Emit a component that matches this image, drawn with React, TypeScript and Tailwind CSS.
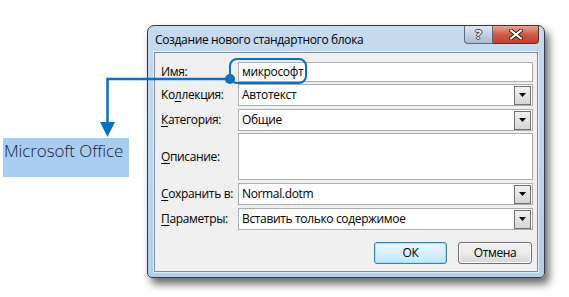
import React from "react";

const font = {
  fontFamily: '"Open Sans", "Noto Sans", Arial, sans-serif',
  letterSpacing: "-0.35px",
};

function Label({ u, rest }: { u: string; rest: string }) {
  return (
    <span className="text-[12px] text-black" style={font}>
      <span className="underline underline-offset-2">{u}</span>
      {rest}
    </span>
  );
}

function Combo({ value }: { value: string }) {
  return (
    <div className="flex h-[22px] items-center border border-[#abadb3] bg-white pl-[3px] pr-[1px]">
      <span className="flex-1 text-[12px] text-black" style={font}>
        {value}
      </span>
      <div className="flex h-[19px] w-[17px] items-center justify-center border border-[#707070] bg-gradient-to-b from-[#f2f2f2] to-[#d6d6d6]">
        <svg width="7" height="4" viewBox="0 0 7 4">
          <polygon points="0,0 7,0 3.5,4" fill="#000" />
        </svg>
      </div>
    </div>
  );
}

export default function App() {
  return (
    <div className="relative h-[297px] w-[569px] overflow-hidden bg-white">
      <div className="pl-[147px] pt-[25px]">
        {/* window */}
        <div className="relative flex h-[253px] w-[398px] flex-col rounded-t-[7px] rounded-b-[5px] border border-[#2f3a48] bg-gradient-to-b from-[#c6daf0] via-[#bfd5ee] to-[#b4cde9] shadow-[4px_6px_9px_rgba(0,0,0,0.6)]">
          {/* title bar */}
          <div className="flex h-[26px] items-start">
            <div
              className="flex-1 pl-[7px] pt-[6px] text-[12px] leading-[15px] text-black"
              style={font}
            >
              Создание нового стандартного блока
            </div>
            <div className="mr-[5px] flex h-[18px]">
              <div className="flex w-[29px] items-center justify-center rounded-bl-[4px] border border-t-0 border-[#5b6c80] bg-gradient-to-b from-[#dde7f2] via-[#c4d2e2] to-[#a9bccf]">
                <span
                  className="text-[13px] font-bold leading-none text-[#f4f7fb]"
                  style={{
                    fontFamily: '"Open Sans", Arial, sans-serif',
                    textShadow:
                      "0 0 1px #3b4656, 1px 0 0 #3b4656, -1px 0 0 #3b4656, 0 1px 0 #3b4656, 0 -1px 0 #3b4656",
                  }}
                >
                  ?
                </span>
              </div>
              <div className="flex w-[46px] items-center justify-center rounded-br-[4px] border border-l-0 border-t-0 border-[#6d2a23] bg-gradient-to-b from-[#e8a597] via-[#cf5a45] to-[#c2412e]">
                <svg width="14" height="11" viewBox="0 0 14 11">
                  <path
                    d="M2 1.5 L12 9.5 M12 1.5 L2 9.5"
                    stroke="#3a1a16"
                    strokeWidth="4"
                    strokeLinecap="round"
                  />
                  <path
                    d="M2 1.5 L12 9.5 M12 1.5 L2 9.5"
                    stroke="#ffffff"
                    strokeWidth="2.2"
                    strokeLinecap="round"
                  />
                </svg>
              </div>
            </div>
          </div>
          {/* client area */}
          <div className="mx-[6px] mb-[5px] flex flex-1 flex-col border border-[#7a8ea8] bg-[#f0f0f0] pl-[6px] pr-[4px] pt-[9px] shadow-[0_0_0_1px_rgba(255,255,255,0.6)]">
            <div className="grid grid-cols-[77px_1fr] items-center">
              <Label u="И" rest="мя:" />
              <div className="flex h-[20px] items-center border border-[#abadb3] bg-white pl-[3px]">
                <span className="text-[12px] text-black" style={font}>
                  микрософт
                </span>
              </div>
            </div>
            <div className="mt-[2px] grid grid-cols-[77px_1fr] items-center">
              <span className="text-[12px] text-black" style={font}>
                Ко<span className="underline underline-offset-2">л</span>лекция:
              </span>
              <Combo value="Автотекст" />
            </div>
            <div className="mt-[3px] grid grid-cols-[77px_1fr] items-center">
              <Label u="К" rest="атегория:" />
              <Combo value="Общие" />
            </div>
            <div className="mt-[2px] grid grid-cols-[77px_1fr] items-center">
              <Label u="О" rest="писание:" />
              <div className="h-[47px] border border-[#abadb3] bg-white" />
            </div>
            <div className="mt-[3px] grid grid-cols-[77px_1fr] items-center">
              <Label u="С" rest="охранить в:" />
              <Combo value="Normal.dotm" />
            </div>
            <div className="mt-[3px] grid grid-cols-[77px_1fr] items-center">
              <Label u="П" rest="араметры:" />
              <Combo value="Вставить только содержимое" />
            </div>
            <div className="mt-[12px] flex justify-end gap-[11px] pr-[1px]">
              <div
                className="flex h-[22px] w-[73px] items-center justify-center rounded-[3px] border border-[#3c7fb1] bg-gradient-to-b from-[#eaf6fd] via-[#d9f0fc] to-[#bee6fd] text-[12px] text-black shadow-[inset_0_0_0_1px_#9fe1f9]"
                style={font}
              >
                ОК
              </div>
              <div
                className="flex h-[22px] w-[74px] items-center justify-center rounded-[3px] border border-[#707070] bg-gradient-to-b from-[#f2f2f2] via-[#ebebeb] to-[#d5d5d5] text-[12px] text-black shadow-[inset_0_0_0_1px_#fcfcfc]"
                style={font}
              >
                Отмена
              </div>
            </div>
          </div>
        </div>
      </div>

      {/* annotation label */}
      <div
        className="absolute left-[3px] top-[138px] h-[39px] w-[126px] whitespace-nowrap bg-[#a8cdf0] pl-[1px] pt-[2px] text-[17px] font-light leading-[22px] text-[#16223a]"
        style={{
          fontFamily: '"Open Sans", "Noto Sans", Arial, sans-serif',
          letterSpacing: "-0.1px",
        }}
      >
        Microsoft Office
      </div>

      {/* callout overlay */}
      <svg
        className="pointer-events-none absolute left-0 top-0"
        width="569"
        height="297"
        viewBox="0 0 569 297"
      >
        <rect
          x="230"
          y="59"
          width="76"
          height="24"
          rx="7"
          fill="none"
          stroke="#0b6fc2"
          strokeWidth="2"
        />
        <path d="M230 79 H107.5 V124" fill="none" stroke="#0b6fc2" strokeWidth="2.5" />
        <circle cx="230" cy="79" r="5" fill="#0b6fc2" />
        <polygon points="100,122 115,122 107.5,137" fill="#0b6fc2" />
      </svg>
    </div>
  );
}
